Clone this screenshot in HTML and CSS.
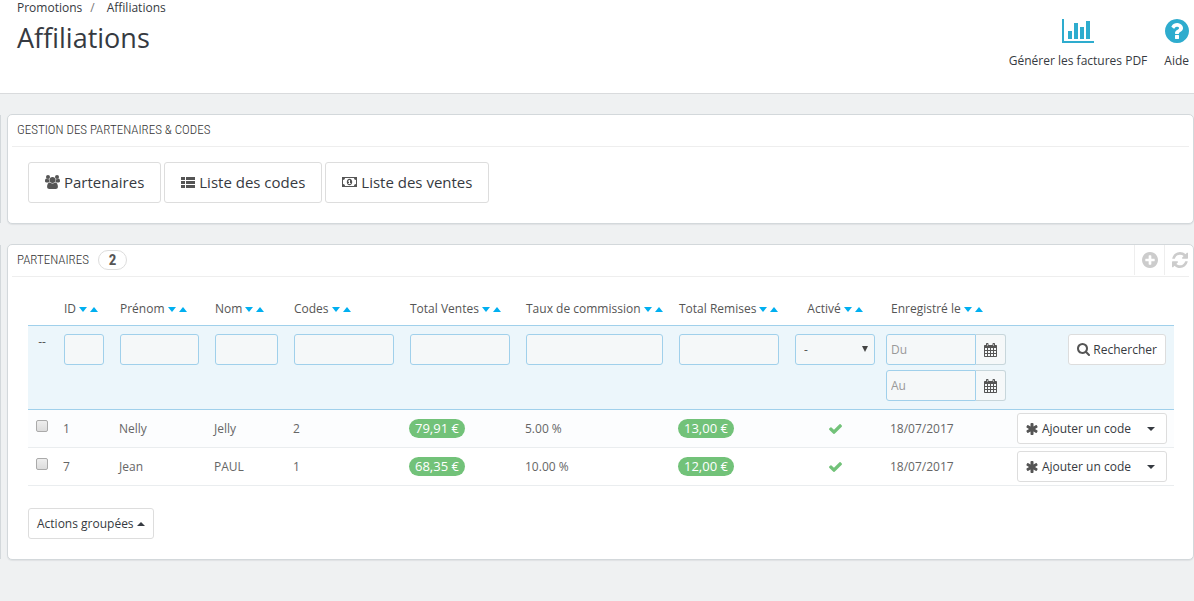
FILE: index.html
```html
<!DOCTYPE html>
<html lang="fr">
<head>
    <meta charset="UTF-8">
    <meta name="viewport" content="width=device-width, initial-scale=1.0">
    <title>Affiliations</title>
    <link rel="stylesheet" href="styles.css">
</head>
<body>

    <!-- Icons -->
    <svg class="sprite" aria-hidden="true">
        <symbol id="i-chart" viewBox="0 0 32 24">
            <path d="M0 0h2v22h30v2H0zM6 12h4v8H6zM12 4h4v16h-4zM18 8h4v12h-4zM24 2h4v18h-4z"/>
        </symbol>
        <symbol id="i-help" viewBox="128 128 1536 1536">
            <path d="M1024 1376v-192q0-14-9-23t-23-9h-192q-14 0-23 9t-9 23v192q0 14 9 23t23 9h192q14 0 23-9t9-23zm256-672q0-88-55.500-163t-138.500-116-170-41q-243 0-371 213-15 24 8 42l132 100q7 6 19 6 16 0 25-12 53-68 86-92 34-24 86-24 48 0 85.500 26t37.500 59q0 38-20 61t-68 45q-63 28-115.500 86.500t-52.500 125.500v36q0 14 9 23t23 9h192q14 0 23-9t9-23q0-19 21.500-49.500t54.500-49.500q32-18 49-28.500t46-35 44.500-48 28-60.500 12.500-81zm384 192q0 209-103 385.500t-279.500 279.500-385.500 103-385.500-103-279.500-279.500-103-385.500 103-385.500 279.500-279.500 385.500-103 385.500 103 279.500 279.500 103 385.500z"/>
        </symbol>
        <symbol id="i-group" viewBox="0 0 15 14">
            <circle cx="3" cy="2" r="2"/>
            <circle cx="12" cy="2" r="2"/>
            <path d="M1.200 3.500C0 4 0 5.500 0 6.300 0 7 .5 7.400 1.200 7.400h2.300C4.200 6.900 4.400 6.600 4.800 6.500 4.200 5.500 4.200 4.700 4.400 3.900 3.500 4.400 2.200 4.300 1.200 3.500zM13.800 3.500C15 4 15 5.500 15 6.300c0 .7-.5 1.100-1.200 1.100h-2.300c-.7-.5-.9-.8-1.300-.9.6-1 .6-1.800.4-2.600.9.5 2.200.4 3.200-.4z"/>
            <circle cx="7.500" cy="5" r="2.900"/>
            <path d="M4.900 7.400C3 7.400 2.100 9.500 2.100 11.800c0 1.400.9 2.200 2.200 2.200h6.400c1.300 0 2.200-.8 2.200-2.200 0-2.300-.9-4.400-2.800-4.400-1.500 1.300-3.700 1.300-5.200 0z"/>
        </symbol>
        <symbol id="i-list" viewBox="0 0 14 11">
            <path d="M0 0h4v3H0zM5 0h9v3H5zM0 4h4v3H0zM5 4h9v3H5zM0 8h4v3H0zM5 8h9v3H5z"/>
        </symbol>
        <symbol id="i-money" viewBox="0 0 15 10">
            <path fill-rule="evenodd" d="M0 0h15v10H0zM3 1C3 2.200 2.200 3 1 3v4c1.200 0 2 .8 2 2h9c0-1.200.8-2 2-2V3c-1.200 0-2-.8-2-2z"/>
            <path fill-rule="evenodd" d="M7.500 1.800c1.700 0 2.700 1.500 2.700 3.200s-1 3.200-2.700 3.200S4.800 6.700 4.800 5s1-3.200 2.700-3.200zM7.200 3L6 4v.7l1-.3v1.900h-.9V7h2.800v-.7H8V3z"/>
        </symbol>
        <symbol id="i-plus" viewBox="128 128 1536 1536">
            <path d="M1344 960v-128q0-26-19-45t-45-19h-256v-256q0-26-19-45t-45-19h-128q-26 0-45 19t-19 45v256h-256q-26 0-45 19t-19 45v128q0 26 19 45t45 19h256v256q0 26 19 45t45 19h128q26 0 45-19t19-45v-256h256q26 0 45-19t19-45zm320-64q0 209-103 385.500t-279.500 279.500-385.500 103-385.500-103-279.500-279.500-103-385.500 103-385.500 279.500-279.500 385.500-103 385.500 103 279.500 279.500 103 385.500z"/>
        </symbol>
        <symbol id="i-refresh" viewBox="128 128 1536 1536">
            <path d="M1639 1056q0 5-1 7-64 268-268 434.500t-478 166.500q-146 0-282.500-55t-243.500-157l-129 129q-19 19-45 19t-45-19-19-45v-448q0-26 19-45t45-19h448q26 0 45 19t19 45-19 45l-137 137q71 66 161 102t187 36q134 0 250-65t186-179q11-17 53-117 8-23 30-23h192q13 0 22.500 9.500t9.500 22.500zm25-800v448q0 26-19 45t-45 19h-448q-26 0-45-19t-19-45 19-45l138-138q-148-137-349-137-134 0-250 65t-186 179q-11 17-53 117-8 23-30 23h-199q-13 0-22.500-9.500t-9.500-22.500v-7q65-268 270-434.500t480-166.500q146 0 284 55.500t245 156.500l130-129q19-19 45-19t45 19 19 45z"/>
        </symbol>
        <symbol id="i-search" viewBox="64 128 1664 1664">
            <path d="M1216 832q0-185-131.500-316.500t-316.500-131.500-316.500 131.500-131.500 316.500 131.500 316.500 316.500 131.500 316.500-131.500 131.500-316.500zm512 832q0 52-38 90t-90 38q-54 0-90-38l-343-342q-179 124-399 124-143 0-273.500-55.500t-225-150-150-225-55.500-273.500 55.500-273.500 150-225 225-150 273.500-55.500 273.500 55.500 225 150 150 225 55.500 273.500q0 220-124 399l343 343q37 37 37 90z"/>
        </symbol>
        <symbol id="i-calendar" viewBox="0 0 13 14">
            <path fill-rule="evenodd" d="M1 2h1V1c0-.6.400-1 1-1h.5c.6 0 1 .4 1 1v1h4V1c0-.6.400-1 1-1h.5c.6 0 1 .4 1 1v1h1c.6 0 1 .4 1 1v10c0 .6-.4 1-1 1H1c-.6 0-1-.4-1-1V3c0-.6.400-1 1-1zM1 5v2h2V5zM4 5v2h2V5zM7 5v2h2V5zM10 5v2h2V5zM1 8v2h2V8zM4 8v2h2V8zM7 8v2h2V8zM10 8v2h2V8zM1 11v2h2v-2zM4 11v2h2v-2zM7 11v2h2v-2zM10 11v2h2v-2zM3 1v2h.5V1zM9.500 1v2h.5V1z"/>
        </symbol>
        <symbol id="i-check" viewBox="121 200 1550 1550">
            <path d="M1671 566q0 40-28 68l-724 724-136 136q-28 28-68 28t-68-28l-136-136-362-362q-28-28-28-68t28-68l136-136q28-28 68-28t68 28l294 295 656-657q28-28 68-28t68 28l136 136q28 28 28 68z"/>
        </symbol>
        <symbol id="i-asterisk" viewBox="128 128 1536 1536">
            <path d="M1546 1050q46 26 59.500 77.500t-12.500 97.500l-64 110q-26 46-77.500 59.500t-97.500-12.500l-266-153v307q0 52-38 90t-90 38h-128q-52 0-90-38t-38-90v-307l-266 153q-46 26-97.500 12.500t-77.500-59.500l-64-110q-26-46-12.500-97.500t59.500-77.500l266-154-266-154q-46-26-59.500-77.500t12.500-97.500l64-110q26-46 77.500-59.500t97.500 12.500l266 153v-307q0-52 38-90t90-38h128q52 0 90 38t38 90v307l266-153q46-26 97.500-12.500t77.500 59.500l64 110q26 46 12.500 97.500t-59.500 77.500l-266 154z"/>
        </symbol>
    </svg>

    <header class="page-head">
        <div class="page-heading">
            <nav class="breadcrumb">
                <a href="#">Promotions</a>
                <span class="sep">/</span>
                <a href="#">Affiliations</a>
            </nav>
            <h1>Affiliations</h1>
        </div>
        <div class="toolbar">
            <a href="#" class="toolbar-btn">
                <svg class="icon-chart"><use href="#i-chart"/></svg>
                Générer les factures PDF
            </a>
            <a href="#" class="toolbar-btn">
                <svg class="icon-help"><use href="#i-help"/></svg>
                Aide
            </a>
        </div>
    </header>

    <main>
        <section class="panel">
            <div class="panel-heading">
                <h2>GESTION DES PARTENAIRES &amp; CODES</h2>
            </div>
            <div class="panel-body links">
                <a href="#" class="btn btn-lg"><svg class="icon-group"><use href="#i-group"/></svg>Partenaires</a>
                <a href="#" class="btn btn-lg"><svg class="icon-list"><use href="#i-list"/></svg>Liste des codes</a>
                <a href="#" class="btn btn-lg"><svg class="icon-money"><use href="#i-money"/></svg>Liste des ventes</a>
            </div>
        </section>

        <section class="panel">
            <div class="panel-heading">
                <h2>PARTENAIRES</h2>
                <span class="count">2</span>
                <div class="heading-actions">
                    <a href="#" aria-label="Ajouter"><svg><use href="#i-plus"/></svg></a>
                    <a href="#" aria-label="Rafraîchir"><svg><use href="#i-refresh"/></svg></a>
                </div>
            </div>
            <div class="panel-body">
                <table>
                    <colgroup>
                        <col class="c-check">
                        <col class="c-id">
                        <col class="c-firstname">
                        <col class="c-name">
                        <col class="c-std">
                        <col class="c-std">
                        <col class="c-rate">
                        <col class="c-std">
                        <col class="c-active">
                        <col class="c-date">
                        <col>
                    </colgroup>
                    <thead>
                        <tr class="titles">
                            <th></th>
                            <th>ID<a href="#" class="down" aria-label="Décroissant"></a><a href="#" class="up" aria-label="Croissant"></a></th>
                            <th>Prénom<a href="#" class="down" aria-label="Décroissant"></a><a href="#" class="up" aria-label="Croissant"></a></th>
                            <th>Nom<a href="#" class="down" aria-label="Décroissant"></a><a href="#" class="up" aria-label="Croissant"></a></th>
                            <th>Codes<a href="#" class="down" aria-label="Décroissant"></a><a href="#" class="up" aria-label="Croissant"></a></th>
                            <th>Total Ventes<a href="#" class="down" aria-label="Décroissant"></a><a href="#" class="up" aria-label="Croissant"></a></th>
                            <th>Taux de commission<a href="#" class="down" aria-label="Décroissant"></a><a href="#" class="up" aria-label="Croissant"></a></th>
                            <th>Total Remises<a href="#" class="down" aria-label="Décroissant"></a><a href="#" class="up" aria-label="Croissant"></a></th>
                            <th class="center">Activé<a href="#" class="down" aria-label="Décroissant"></a><a href="#" class="up" aria-label="Croissant"></a></th>
                            <th>Enregistré le<a href="#" class="down" aria-label="Décroissant"></a><a href="#" class="up" aria-label="Croissant"></a></th>
                            <th></th>
                        </tr>
                        <tr class="filters">
                            <th class="center">--</th>
                            <th><input type="text" aria-label="ID"></th>
                            <th><input type="text" aria-label="Prénom"></th>
                            <th><input type="text" aria-label="Nom"></th>
                            <th><input type="text" aria-label="Codes"></th>
                            <th><input type="text" aria-label="Total Ventes"></th>
                            <th><input type="text" aria-label="Taux de commission"></th>
                            <th><input type="text" aria-label="Total Remises"></th>
                            <th>
                                <div class="select">
                                    <select aria-label="Activé">
                                        <option>-</option>
                                        <option>Oui</option>
                                        <option>Non</option>
                                    </select>
                                </div>
                            </th>
                            <th class="dates">
                                <div class="date-group">
                                    <input type="text" id="date-from" placeholder="Du" aria-label="Du">
                                    <label for="date-from"><svg><use href="#i-calendar"/></svg></label>
                                </div>
                                <div class="date-group">
                                    <input type="text" id="date-to" placeholder="Au" aria-label="Au">
                                    <label for="date-to"><svg><use href="#i-calendar"/></svg></label>
                                </div>
                            </th>
                            <th class="right">
                                <button type="button" class="btn"><svg class="icon-search"><use href="#i-search"/></svg>Rechercher</button>
                            </th>
                        </tr>
                    </thead>
                    <tbody>
                        <tr>
                            <td class="center"><input type="checkbox" aria-label="Nelly Jelly"></td>
                            <td>1</td>
                            <td>Nelly</td>
                            <td>Jelly</td>
                            <td>2</td>
                            <td><span class="badge">79,91 €</span></td>
                            <td>5.00 %</td>
                            <td><span class="badge">13,00 €</span></td>
                            <td class="center"><svg class="icon-check"><use href="#i-check"/></svg></td>
                            <td>18/07/2017</td>
                            <td class="right">
                                <div class="btn-group">
                                    <button type="button"><svg class="icon-asterisk"><use href="#i-asterisk"/></svg>Ajouter un code</button>
                                    <button type="button" class="toggle" aria-label="Plus d'actions"><span class="caret"></span></button>
                                </div>
                            </td>
                        </tr>
                        <tr>
                            <td class="center"><input type="checkbox" aria-label="Jean Paul"></td>
                            <td>7</td>
                            <td>Jean</td>
                            <td>PAUL</td>
                            <td>1</td>
                            <td><span class="badge">68,35 €</span></td>
                            <td>10.00 %</td>
                            <td><span class="badge">12,00 €</span></td>
                            <td class="center"><svg class="icon-check"><use href="#i-check"/></svg></td>
                            <td>18/07/2017</td>
                            <td class="right">
                                <div class="btn-group">
                                    <button type="button"><svg class="icon-asterisk"><use href="#i-asterisk"/></svg>Ajouter un code</button>
                                    <button type="button" class="toggle" aria-label="Plus d'actions"><span class="caret"></span></button>
                                </div>
                            </td>
                        </tr>
                    </tbody>
                </table>
                <button type="button" class="btn bulk">Actions groupées<span class="caret caret-up"></span></button>
            </div>
        </section>
    </main>

</body>
</html>
```
FILE: styles.css
```css
* {
    box-sizing: border-box;
}
body {
    margin: 0;
    background-color: #eff1f2;
    color: #555;
    font-family: "Open Sans", "Noto Sans", sans-serif;
    font-size: 12px;
    line-height: 16px;
}
a {
    color: inherit;
    text-decoration: none;
}
svg {
    fill: currentColor;
    flex: none;
}
input, select, button {
    font: inherit;
    color: inherit;
}
.sprite {
    display: none;
}

/* Header */
.page-head {
    display: flex;
    justify-content: space-between;
    height: 94px;
    padding: 0 5px 0 17px;
    background-color: #fff;
    border-bottom: 1px solid #d9dbdd;
    color: #363a41;
}
.breadcrumb {
    display: flex;
    gap: 8px;
}
.breadcrumb .sep {
    margin-right: 4px;
    color: #777;
}
h1 {
    margin: 4px 0 0;
    font-size: 27px;
    font-weight: 400;
    line-height: 36px;
}
.toolbar {
    display: flex;
    gap: 17px;
    padding-top: 19px;
}
.toolbar-btn {
    display: flex;
    flex-direction: column;
    align-items: center;
    gap: 10px;
}
.toolbar svg {
    color: #2eacce;
    height: 24px;
}
.icon-chart { width: 32px; }
.icon-help { width: 24px; }

/* Panels */
main {
    display: flex;
    flex-direction: column;
    gap: 20px;
    padding: 20px 0 20px 7px;
}
.panel {
    position: relative;
    background-color: #fff;
    border: 1px solid #d3d8db;
    border-radius: 5px;
    box-shadow: 0 1px 1px #dfe2e4;
}
/* edge of the folded side menu */
.panel::before {
    content: "";
    position: absolute;
    top: 0;
    bottom: 0;
    left: -8px;
    width: 1px;
    background-color: #d3d8db;
}
.panel-heading {
    display: flex;
    align-items: center;
    height: 32px;
    margin: 0 4px;
    padding: 0 0 1px 5px;
    border-bottom: 1px solid #eee;
}
h2, .count {
    font-family: "Ubuntu Condensed", "Roboto Condensed", sans-serif;
}
h2 {
    margin: 0;
    font-size: 13px;
    font-weight: 300;
    color: #333;
}
.count {
    width: 29px;
    margin-left: 9px;
    border: 1px solid #ddd;
    border-radius: 10px;
    font-size: 15px;
    font-weight: 700;
    line-height: 18px;
    text-align: center;
}
.heading-actions {
    display: flex;
    align-self: stretch;
    margin-left: auto;
}
.heading-actions a {
    display: flex;
    align-items: center;
    width: 30px;
    padding-left: 7px;
    border-left: 1px solid #eee;
    color: #ccc;
}
.heading-actions a:last-child {
    width: 25px;
}
.heading-actions svg {
    width: 16px;
    height: 16px;
}
.panel-body {
    padding: 15px 19px 20px 20px;
}
.links {
    display: flex;
    gap: 3px;
}

/* Buttons */
.btn {
    display: inline-flex;
    align-items: center;
    height: 31px;
    padding: 0 8px;
    background-color: #fff;
    border: 1px solid #ddd;
    border-radius: 3px;
    color: #363a41;
}
.btn svg {
    margin-right: 3px;
    color: #555;
}
.btn-lg {
    height: 41px;
    padding: 0 16px 1px;
    font-size: 15px;
}
.btn-lg svg {
    margin-right: 4px;
}
.icon-group { width: 15px; height: 14px; }
.icon-list { width: 14px; height: 11px; }
.icon-money { width: 15px; height: 10px; }
.icon-search { width: 13px; height: 13px; }
.icon-check { width: 13px; height: 13px; color: #72c279; vertical-align: middle; }
.icon-asterisk { width: 12px; height: 12px; }
.btn-group {
    display: inline-flex;
    height: 31px;
    background-color: #fff;
    border: 1px solid #ddd;
    border-radius: 3px;
    vertical-align: top;
}
.btn-group button {
    display: flex;
    align-items: center;
    gap: 4px;
    padding: 0 0 0 8px;
    background: none;
    border: 0;
    color: #363a41;
}
.btn-group svg {
    color: #555;
}
.btn-group .toggle {
    padding: 0 11px 0 16px;
}
.caret {
    border: 4px solid transparent;
    border-top-color: currentColor;
    border-bottom: 0;
}
.caret-up {
    margin-left: 3px;
    border-top: 0;
    border-bottom: 4px solid currentColor;
}
.bulk {
    margin-top: 22px;
}

/* Table */
table {
    width: 100%;
    table-layout: fixed;
    border-collapse: separate;
    border-spacing: 0;
}
.c-check { width: 28px; }
.c-id { width: 56px; }
.c-firstname { width: 95px; }
.c-name { width: 79px; }
.c-std { width: 116px; }
.c-rate { width: 153px; }
.c-active { width: 96px; }
.c-date { width: 126px; }
th {
    height: 34px;
    padding: 0 8px;
    font-weight: 400;
    text-align: left;
    white-space: nowrap;
}
td {
    height: 38px;
    padding: 3px 7px;
    border-bottom: 1px solid #eaedef;
    color: #666;
}
tbody tr:nth-child(odd) {
    background-color: #fcfdfe;
}
.center {
    text-align: center;
}
.right {
    text-align: right;
}
.titles th {
    border-bottom: 1px solid #a0d0eb;
}
.down, .up {
    display: inline-block;
    margin-left: 3px;
    border: 4px solid transparent;
    vertical-align: middle;
}
.down {
    border-top: 5px solid #00aff0;
    border-bottom: 0;
}
.up {
    border-top: 0;
    border-bottom: 5px solid #00aff0;
}
.filters th {
    height: 84px;
    padding: 8px;
    background-color: #ecf6fb;
    border-bottom: 1px solid #a0d0eb;
    vertical-align: top;
}
.filters .dates {
    padding: 8px 3px;
}
input[type="text"], select {
    display: block;
    width: 100%;
    height: 31px;
    padding: 0 4px;
    background-color: #f5f8f9;
    border: 1px solid #a0d0eb;
    border-radius: 3px;
}
input::placeholder {
    color: #999;
}
.select {
    position: relative;
}
select {
    padding: 0 8px;
    appearance: none;
}
.select::after {
    content: "";
    position: absolute;
    top: 12px;
    right: 7px;
    border: 3px solid transparent;
    border-top: 6px solid #444;
    border-bottom: 0;
    pointer-events: none;
}
.date-group {
    display: flex;
}
.date-group + .date-group {
    margin-top: 5px;
}
.date-group input[type="text"] {
    flex: 1;
    min-width: 0;
    border-radius: 3px 0 0 3px;
}
.date-group label {
    display: flex;
    align-items: center;
    justify-content: center;
    width: 30px;
    background-color: #f5f8f9;
    border: 1px solid #c7d6db;
    border-left: 0;
    border-radius: 0 3px 3px 0;
}
.date-group svg {
    width: 13px;
    height: 14px;
}
input[type="checkbox"] {
    display: block;
    width: 12px;
    height: 12px;
    margin: 0 auto 5px;
    appearance: none;
    background: linear-gradient(#eee, #dcdcdc);
    border: 1px solid #aaa;
    border-radius: 2px;
}
.badge {
    display: inline-block;
    padding: 1px 6px 2px;
    background-color: #72c279;
    border-radius: 10px;
    color: #fff;
    font-size: 13px;
}
```
